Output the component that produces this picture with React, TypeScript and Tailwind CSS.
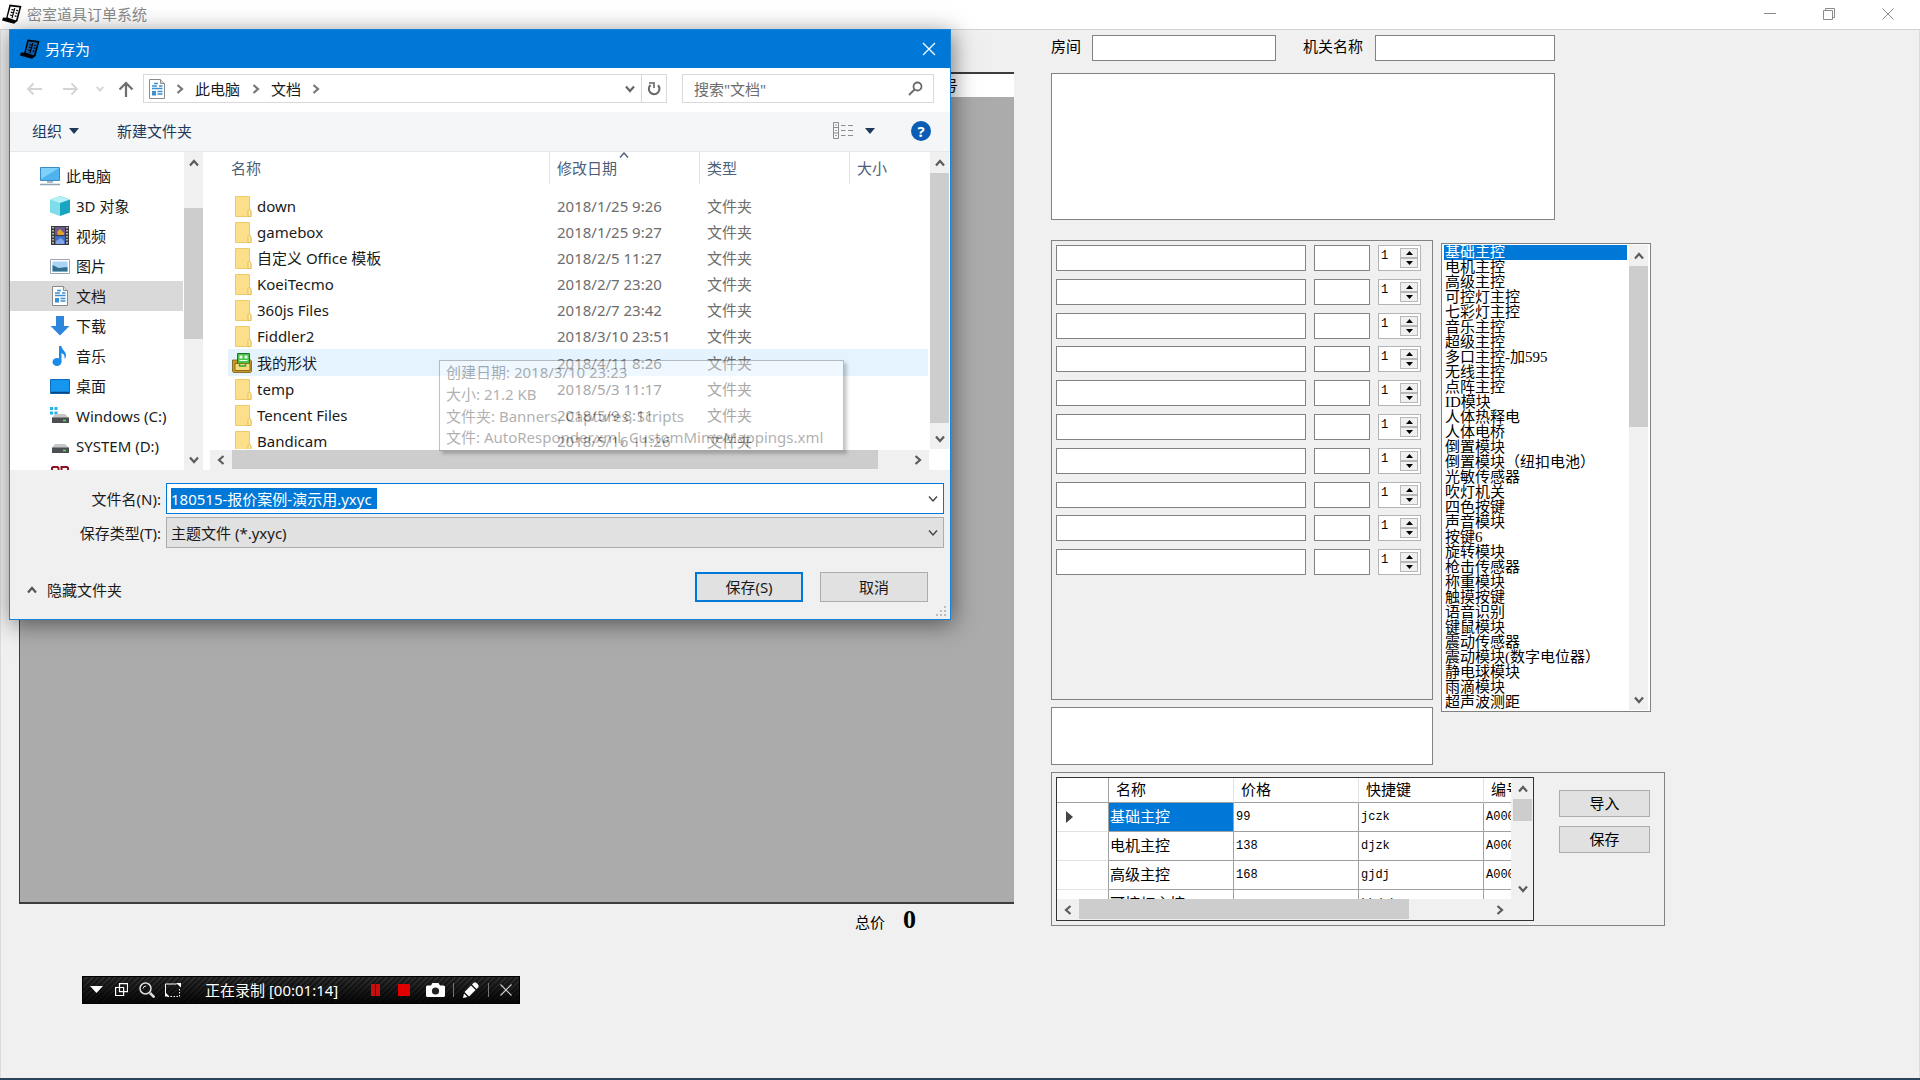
import type { ReactNode } from "react";

const ui = "font-['Noto_Sans','Noto_Sans_CJK_SC',sans-serif] text-[15px] leading-5";
const song = "font-['Liberation_Serif','Noto_Sans_CJK_SC',serif] text-[15px] leading-5";
const mono = "font-['Liberation_Mono',monospace] text-xs";

type Dir = "up" | "down" | "left" | "right";

const chevrons: Record<Dir, string> = {
  up: "M2 8.5 6 4l4 4.5",
  down: "M2 3.5 6 8l4-4.5",
  left: "M8.5 2 4 6l4.5 4",
  right: "M3.5 2 8 6l-4.5 4",
};

function Chevron({ dir, thin, className = "" }: { dir: Dir; thin?: boolean; className?: string }) {
  return (
    <svg viewBox="0 0 12 12" className={`h-3 w-3 shrink-0 ${className}`} fill="none" stroke="currentColor" strokeWidth={thin ? 1.4 : 2.2}>
      <path d={chevrons[dir]} />
    </svg>
  );
}

function VScroll({ className, thumb }: { className: string; thumb: string }) {
  return (
    <div className={`flex w-[19px] shrink-0 flex-col items-center bg-[#f0f0f0] text-[#5c5c5c] ${className}`}>
      <button aria-label="向上滚动" className="flex h-[21px] w-full shrink-0 items-center justify-center">
        <Chevron dir="up" />
      </button>
      <div className="w-full flex-1 overflow-hidden">
        <div className={`w-full bg-[#cdcdcd] ${thumb}`} />
      </div>
      <button aria-label="向下滚动" className="flex h-[21px] w-full shrink-0 items-center justify-center">
        <Chevron dir="down" />
      </button>
    </div>
  );
}

function HScroll({ className, thumb }: { className: string; thumb: string }) {
  return (
    <div className={`flex items-stretch bg-[#f0f0f0] text-[#5c5c5c] ${className}`}>
      <button aria-label="向左滚动" className="flex w-[22px] shrink-0 items-center justify-center">
        <Chevron dir="left" />
      </button>
      <div className="flex-1">
        <div className={`h-full bg-[#cdcdcd] ${thumb}`} />
      </div>
      <button aria-label="向右滚动" className="flex w-[22px] shrink-0 items-center justify-center">
        <Chevron dir="right" />
      </button>
    </div>
  );
}

function AppIcon({ paper }: { paper: string }) {
  return (
    <svg viewBox="0 0 20 20" className="h-5 w-5 shrink-0">
      <path d="M7.500.5 19.500 2 15.500 17 12 19.800 0 16.500l1-3 3.200.3z" fill="#000" />
      <path d="M8.600 2.500 17.500 3.600 14 16.200 11.800 15.800 5.600 13.400z" fill={paper} />
      <path d="M9.500 5.500l2 .4M8.800 8.200l2 .5M8 11l2 .5M12.800 4.200l-2.800 10M14.200 6.300l1.800.3M13.500 9l1.900.4M12.700 11.800l1.800.5" stroke="#000" strokeWidth="1.200" fill="none" />
    </svg>
  );
}

function DocIcon() {
  return (
    <svg viewBox="0 0 16 20" className="h-5 w-4">
      <path d="M.5.5h11l4 4v15H.5z" fill="#fff" stroke="#8a8a8a" />
      <path d="M11.500.5v4h4" fill="#ddd" stroke="#8a8a8a" />
      <path d="M5 4.500h4M3 7h5M10 7h3.500M3 9.500h10.500M8.500 12.500h5M8.500 15h5" stroke="#3b8ed0" strokeWidth="1.400" />
      <path d="M3 12h4v4.500H3z" fill="#3b8ed0" />
    </svg>
  );
}

function FolderIcon() {
  return (
    <svg viewBox="0 0 17 21" className="h-[21px] w-[17px] shrink-0">
      <path d="M.5.5h14v14l1.500 1v5H.5z" fill="#fbdf8a" stroke="#ecc969" />
      <path d="M13 20.500v-6l1.500-1.500 1.500 2v5.500z" fill="#ffe9a6" stroke="#e3bd58" />
    </svg>
  );
}

function ShapesIcon() {
  return (
    <svg viewBox="0 0 20 20" className="h-5 w-5 shrink-0">
      <path d="M.5 7h5v-1h12l2 2v10.500l-1 1h-17l-1-1z" fill="#c89a2c" stroke="#7a5a10" strokeWidth=".8" />
      <path d="M5.500.5h12v11h-12z" fill="#4cc44c" stroke="#167a1c" />
      <path d="M7.500 2.500h3v3h-3zM12.500 2.500h3v3h-3z" fill="#e9ffe6" />
      <path d="M7.500 7.500h8" stroke="#e9ffe6" />
      <path d="M3 10.500h15v7H3z" fill="#f4dc7c" stroke="#8c6a18" />
      <path d="M7.500 10v3h6v-3" fill="none" stroke="#35a335" strokeWidth="1.500" />
    </svg>
  );
}

const places: { name: string; icon: ReactNode; root?: boolean }[] = [
  {
    name: "此电脑",
    root: true,
    icon: (
      <>
        <path d="M.5 1.500h19v13H.5z" fill="#4fb3ee" stroke="#3b8cc4" />
        <path d="M1 2h18L1 13z" fill="#7fd0fa" />
        <path d="M7 16h6M0 18.500h20" stroke="#8fa3b3" strokeWidth="1.500" />
      </>
    ),
  },
  {
    name: "3D 对象",
    icon: (
      <>
        <path d="M10 0 0 3.500v13L10 20z" fill="#7fdcea" />
        <path d="M10 0l10 3.500v13L10 20z" fill="#18a5bf" />
        <path d="M10 0 0 3.500 10 7l10-3.500z" fill="#b5f0f5" />
      </>
    ),
  },
  {
    name: "视频",
    icon: (
      <>
        <path d="M1 0h18v19H1z" fill="#3a3a3a" />
        <path d="M5 1h10v8H5z" fill="#6a5a8c" />
        <path d="M5 10h10v8H5z" fill="#3a6cc8" />
        <path d="M7 6l3-3 4 4v2H8z" fill="#e0a030" />
        <path d="M6 15l5-3 3 3v3H6z" fill="#7fa5e8" />
        <path d="M3 1v18M17 1v18" stroke="#ddd" strokeWidth="1.500" strokeDasharray="1.500 1.500" />
      </>
    ),
  },
  {
    name: "图片",
    icon: (
      <>
        <path d="M.5 3.500h19v14H.5z" fill="#fff" stroke="#9aa5b0" />
        <path d="M2.500 5.500h15v10h-15z" fill="#a9d3f2" />
        <path d="M2.500 9l6 3 9-1v4.500h-15z" fill="#2f6e8c" />
      </>
    ),
  },
  { name: "文档", icon: null },
  { name: "下载", icon: <path d="M6 0h8v10h5.500L10 19.500.5 10H6z" fill="#2e86dc" /> },
  {
    name: "音乐",
    icon: (
      <>
        <ellipse cx="7" cy="16" rx="4.500" ry="4" fill="#1a8be8" />
        <path d="M9 0h2.500c0 4 5 5 4.500 10-.5 2-1 2.500-1.500 3 .5-4-1-5-3-6v9H9z" fill="#1a8be8" />
      </>
    ),
  },
  {
    name: "桌面",
    icon: (
      <>
        <path d="M.5 3.500h19v14H.5z" fill="#1796f0" stroke="#0c6cc0" />
        <path d="M1 16.500h18" stroke="#08457c" strokeWidth="1.500" />
      </>
    ),
  },
  {
    name: "Windows (C:)",
    icon: (
      <>
        <path d="M0 1h3v3H0zM4.500 1h3v3h-3zM0 5.500h3v3H0zM4.500 5.500h3v3h-3z" fill="#22b1e8" />
        <path d="M5 8h10l4 4H2z" fill="#c3c7ca" />
        <path d="M2 11.500h17v5.500H2z" fill="#4c4f52" />
        <path d="M13 14.500h3" stroke="#5fe06a" strokeWidth="1.500" />
      </>
    ),
  },
  {
    name: "SYSTEM (D:)",
    icon: (
      <>
        <path d="M5 8h10l4 4H2z" fill="#c3c7ca" />
        <path d="M2 11.500h17v5.500H2z" fill="#4c4f52" />
        <path d="M13 14.500h3" stroke="#5fe06a" strokeWidth="1.500" />
      </>
    ),
  },
];

const files = [
  ["down", "2018/1/25 9:26"],
  ["gamebox", "2018/1/25 9:27"],
  ["自定义 Office 模板", "2018/2/5 11:27"],
  ["KoeiTecmo", "2018/2/7 23:20"],
  ["360js Files", "2018/2/7 23:42"],
  ["Fiddler2", "2018/3/10 23:51"],
  ["我的形状", "2018/4/11 8:26"],
  ["temp", "2018/5/3 11:17"],
  ["Tencent Files", "2018/5/9 8:11"],
  ["Bandicam", "2018/5/16 11:26"],
];

const modules = [
  "基础主控", "电机主控", "高级主控", "可控灯主控", "七彩灯主控", "音乐主控", "超级主控",
  "多口主控-加595", "无线主控", "点阵主控", "ID模块", "人体热释电", "人体电桥", "倒置模块",
  "倒置模块（纽扣电池）", "光敏传感器", "吹灯机关", "四色按键", "声音模块", "按键6", "旋转模块",
  "枪击传感器", "称重模块", "触摸按键", "语音识别", "键鼠模块", "震动传感器",
  "震动模块(数字电位器）", "静电球模块", "雨滴模块", "超声波测距",
];

const prices = [
  ["基础主控", "99", "jczk", "A0001"],
  ["电机主控", "138", "djzk", "A0002"],
  ["高级主控", "168", "gjdj", "A0003"],
  ["可控灯主控", "", "kkdzk", ""],
];

function SaveDialog() {
  return (
    <section
      role="dialog"
      aria-label="另存为"
      className={`absolute top-[29px] left-[9px] flex w-[942px] flex-col border border-[#1883d7] bg-[#f0f0f0] text-[#1a1a1a] shadow-[2px_4px_22px_rgba(0,0,0,0.5)] ${ui}`}
    >
      <header className="flex h-[38px] items-center bg-[#0078d7] pr-[13px] pl-[10px] text-white">
        <AppIcon paper="#0a5fae" />
        <h2 className="ml-[5px] flex-1 pb-px">另存为</h2>
        <button aria-label="关闭" className="p-px">
          <svg viewBox="0 0 14 14" className="h-[14px] w-[14px]" stroke="currentColor" strokeWidth="1.300">
            <path d="M1 1l12 12M13 1 1 13" />
          </svg>
        </button>
      </header>

      <div className="flex h-11 items-center bg-white px-4 pb-[3px]">
        <button aria-label="后退" className="text-[#d4d4d4]">
          <svg viewBox="0 0 16 16" className="h-4 w-4" fill="none" stroke="currentColor" strokeWidth="1.800">
            <path d="M16 8H2M7.500 2.500 2 8l5.500 5.500" />
          </svg>
        </button>
        <button aria-label="前进" className="ml-[21px] text-[#d4d4d4]">
          <svg viewBox="0 0 16 16" className="h-4 w-4" fill="none" stroke="currentColor" strokeWidth="1.800">
            <path d="M0 8h14M8.500 2.500 14 8l-5.500 5.500" />
          </svg>
        </button>
        <button aria-label="最近位置" className="ml-4 text-[#d4d4d4]">
          <Chevron dir="down" className="h-[10px] w-[10px]" />
        </button>
        <button aria-label="上移" className="ml-[13px] text-[#6e6e6e]">
          <svg viewBox="0 0 16 16" className="h-4 w-4" fill="none" stroke="currentColor" strokeWidth="2.200">
            <path d="M8 16V2M1.500 8.500 8 2l6.500 6.500" />
          </svg>
        </button>
        <nav className="ml-[9px] flex h-[29px] flex-1 items-center border border-[#d9d9d9] pl-[5px]">
          <DocIcon />
          <Chevron dir="right" className="ml-[9px] text-[#777]" />
          <a href="#pc" className="ml-[9px]">此电脑</a>
          <Chevron dir="right" className="ml-[10px] text-[#777]" />
          <a href="#docs" className="ml-[9px]">文档</a>
          <Chevron dir="right" className="ml-[9px] text-[#777]" />
          <span className="flex-1" />
          <button aria-label="历史位置" className="px-[5px] text-[#666]">
            <Chevron dir="down" />
          </button>
          <button aria-label="刷新" className="flex h-full w-[25px] items-center justify-center border-l border-[#d9d9d9] text-[#666]">
            <svg viewBox="0 0 14 14" className="h-[14px] w-[14px]" fill="none" stroke="currentColor" strokeWidth="2">
              <path d="M3.500 3a5.300 5.300 0 1 0 7.500.2" />
              <path d="M2 1h5v5" strokeWidth="1.600" />
            </svg>
          </button>
        </nav>
        <div className="ml-[15px] flex h-[29px] w-[252px] items-center border border-[#d9d9d9] pr-[10px] pl-[11px]">
          <input aria-label="搜索文档" placeholder={'搜索"文档"'} className="min-w-0 flex-1 outline-none placeholder:text-[#6d6d6d]" />
          <svg viewBox="0 0 15 15" className="h-[15px] w-[15px] text-[#6a6a6a]" fill="none" stroke="currentColor" strokeWidth="1.800">
            <circle cx="9.500" cy="5.500" r="4" />
            <path d="M6.500 8.500 1 14" />
          </svg>
        </div>
      </div>

      <div className="flex h-10 items-center border-b border-[#e8e8e8] bg-[#f5f6f7] pr-[19px] pb-[2px] pl-[22px] text-[#1e395b]">
        <button className="flex items-center gap-[7px]">
          组织
          <svg viewBox="0 0 10 6" className="h-[6px] w-[10px]" fill="currentColor"><path d="M0 0h10L5 6z" /></svg>
        </button>
        <button className="ml-[38px]">新建文件夹</button>
        <span className="flex-1" />
        <button aria-label="更改视图" className="flex items-center gap-[12px]">
          <svg viewBox="0 0 20 17" className="h-[17px] w-5" fill="none" stroke="#8c8c8c">
            <path d="M.5.5h5v16h-5zM.5 5.500h5M.5 11h5M8 3.500h4.500M15 3.500h5M8 8.500h4.500M15 8.500h5M8 13.500h4.500M15 13.500h5" />
            <path d="M2.500 3h1M2.500 8.500h1M2.500 13.500h1" stroke="#555" />
          </svg>
          <svg viewBox="0 0 10 6" className="h-[6px] w-[10px]" fill="currentColor"><path d="M0 0h10L5 6z" /></svg>
        </button>
        <button aria-label="帮助" className="ml-9 flex h-5 w-5 items-center justify-center rounded-full bg-[#0b5cb5] font-bold text-white">
          ?
        </button>
      </div>

      <div className="flex h-[318px] bg-white">
        <ul className="h-full w-[174px] overflow-hidden pt-[9px] pr-px">
          {places.map((p) => (
            <li
              key={p.name}
              className={`flex h-[30px] items-center gap-[6px] ${p.root ? "pl-[30px]" : "pl-10"} ${p.name === "文档" ? "bg-[#d9d9d9]" : ""}`}
            >
              {p.icon ? (
                <svg viewBox="0 0 20 20" className="h-5 w-5 shrink-0">{p.icon}</svg>
              ) : (
                <span className="flex w-5 shrink-0 justify-center"><DocIcon /></span>
              )}
              <a href="#place" className="whitespace-nowrap">{p.name}</a>
            </li>
          ))}
          <li className="flex h-[30px] items-start pt-[5px] pl-[41px]">
            <svg viewBox="0 0 18 14" className="h-[14px] w-[18px]" fill="none" stroke="#8c1020" strokeWidth="2">
              <path d="M7.500 4.500V2L6.500 1H2L1 2v9h6.500M10.500 12V1H16l1 1v5h-6" />
            </svg>
          </li>
        </ul>
        <VScroll className="mr-[7px]" thumb="mt-[35px] h-[131px]" />

        <div className="flex min-w-0 flex-1 flex-col">
          <div className="flex h-[297px]">
            <div className="h-full min-w-0 flex-1 overflow-hidden pl-[18px]">
              <table className="w-full table-fixed border-collapse text-left">
                <thead>
                  <tr className="h-[41px] align-top text-[#4c607a]">
                    <th className="w-[322px] p-0 font-normal">
                      <div className="flex h-8 items-center border-r border-[#e2e2e2] pl-[3px]">名称</div>
                    </th>
                    <th className="w-[150px] p-0 font-normal">
                      <div className="relative flex h-8 items-center border-r border-[#e2e2e2] pl-[7px]">
                        修改日期
                        <Chevron dir="up" thin className="absolute -top-[3px] left-[68px]" />
                      </div>
                    </th>
                    <th className="w-[150px] p-0 font-normal">
                      <div className="flex h-8 items-center border-r border-[#e2e2e2] pl-[7px]">类型</div>
                    </th>
                    <th className="p-0 font-normal">
                      <div className="flex h-8 items-center pl-[7px]">大小</div>
                    </th>
                  </tr>
                </thead>
                <tbody>
                  {files.map(([name, date]) => (
                    <tr key={name} className={name === "我的形状" ? "h-[27px] bg-[#e5f3ff]" : "h-[26px]"}>
                      <td className="p-0">
                        <div className={`flex items-center ${name === "我的形状" ? "gap-[5px] pl-1" : "gap-[5px] pl-[7px]"}`}>
                          {name === "我的形状" ? <ShapesIcon /> : <FolderIcon />}
                          {name}
                        </div>
                      </td>
                      <td className="p-0 pl-[7px] whitespace-nowrap text-[#6d6d6d]">{date}</td>
                      <td className="p-0 pl-[7px] text-[#6d6d6d]">文件夹</td>
                      <td className="p-0" />
                    </tr>
                  ))}
                </tbody>
              </table>
            </div>
            <VScroll className="mr-px ml-[2px]" thumb="h-[250px]" />
          </div>
          <HScroll className="mt-px mr-[21px] h-5" thumb="w-[646px] border-b border-[#f0f0f0]" />
        </div>
      </div>

      <div
        role="tooltip"
        className="absolute top-[330px] left-[429px] grid h-[91px] w-[405px] auto-rows-fr border border-[#666] bg-white px-[6px] py-px whitespace-nowrap text-[#3c3c3c] opacity-40 shadow-[3px_3px_3px_rgba(0,0,0,0.5)]"
      >
        <span>创建日期: 2018/3/10 23:23</span>
        <span>大小: 21.2 KB</span>
        <span>文件夹: Banners, Captures, Scripts</span>
        <span>文件: AutoResponder.xml, CustomMimeMappings.xml</span>
      </div>

      <div className="mt-[13px] flex h-[31px] items-center pr-[6px]">
        <label htmlFor="filename" className="w-[151px] shrink-0 text-right">文件名(N):</label>
        <div className="ml-[5px] flex h-full flex-1 items-center border border-[#0078d7] bg-white pr-1 pl-1">
          <input
            id="filename"
            defaultValue="180515-报价案例-演示用.yxyc"
            className="h-[21px] w-[206px] bg-[#0078d7] text-white outline-none"
          />
          <span className="flex-1" />
          <Chevron dir="down" thin className="text-[#444]" />
        </div>
      </div>
      <div className="mt-[3px] flex h-[31px] items-center pr-[6px]">
        <label htmlFor="filetype" className="w-[151px] shrink-0 text-right">保存类型(T):</label>
        <div className="ml-[5px] flex h-full flex-1 items-center border border-[#adadad] bg-[#e1e1e1] pr-1 pl-1">
          <select id="filetype" className="flex-1 appearance-none outline-none">
            <option>主题文件 (*.yxyc)</option>
          </select>
          <Chevron dir="down" thin className="text-[#444]" />
        </div>
      </div>
      <div className="mt-6 flex items-start pr-[22px] pl-4">
        <button className="mt-[8px] flex flex-1 items-center gap-[9px]">
          <Chevron dir="up" className="text-[#555]" />
          隐藏文件夹
        </button>
        <button className="h-[30px] w-[108px] border-2 border-[#0078d7] bg-[#e1e1e1]">保存(S)</button>
        <button className="ml-[17px] h-[30px] w-[108px] border border-[#adadad] bg-[#e1e1e1]">取消</button>
      </div>
      <svg viewBox="0 0 11 11" className="mt-1 mr-[3px] mb-[2px] h-[11px] w-[11px] self-end" fill="#bdbdbd">
        <path d="M8 0h2v2H8zM4 4h2v2H4zM8 4h2v2H8zM0 8h2v2H0zM4 8h2v2H4zM8 8h2v2H8z" />
      </svg>
    </section>
  );
}

function QuantityRow({ index }: { index: number }) {
  return (
    <div className="flex items-start">
      <input aria-label={`名称 ${index}`} className="h-[26px] min-w-0 flex-1 border border-[#828282] bg-white" />
      <input aria-label={`价格 ${index}`} className="ml-2 h-[26px] w-[56px] border border-[#828282] bg-white" />
      <div className="ml-2 flex h-[26px] w-[43px] border border-[#b4b4b4] bg-white p-[2px]">
        <input aria-label={`数量 ${index}`} defaultValue="1" className={`h-4 w-5 min-w-0 flex-1 outline-none ${mono}`} />
        <div className="flex w-[18px] flex-col">
          <button aria-label="增加" className="flex flex-1 items-center justify-center border border-[#b8b8b8] bg-[#f0f0f0]">
            <svg viewBox="0 0 7 4" className="h-1 w-[7px]"><path d="M0 4h7L3.500 0z" /></svg>
          </button>
          <button aria-label="减少" className="flex flex-1 items-center justify-center border border-[#b8b8b8] bg-[#f0f0f0]">
            <svg viewBox="0 0 7 4" className="h-1 w-[7px]"><path d="M0 0h7L3.500 4z" /></svg>
          </button>
        </div>
      </div>
    </div>
  );
}

function PriceTable() {
  const line = "border-r border-b border-[#a0a0a0]";
  return (
    <div className="flex h-[144px] w-[478px] flex-col border border-[#333] bg-[#f0f0f0]">
      <div className="flex h-[121px]">
        <div className="min-w-0 flex-1 overflow-hidden bg-white">
          <table className="w-[552px] table-fixed border-separate border-spacing-0 text-left">
            <thead>
              <tr className="h-[25px]">
                <th className={`w-[52px] p-0 ${line}`} />
                {["名称", "价格", "快捷键", "编号"].map((h) => (
                  <th key={h} className="border-r border-b border-r-[#e2e2e2] border-b-[#a0a0a0] p-0 pl-[7px] font-normal">{h}</th>
                ))}
              </tr>
            </thead>
            <tbody>
              {prices.map(([name, price, key, code], i) => (
                <tr key={name} className="h-[29px]">
                  <td className="border-r border-b border-r-[#a0a0a0] border-b-[#e2e2e2] p-0 pl-[9px]">
                    {i === 0 ? (
                      <svg viewBox="0 0 7 12" className="h-3 w-[7px]" fill="#444"><path d="M0 0v12l7-6z" /></svg>
                    ) : null}
                  </td>
                  <td className={`p-0 pl-px ${line} ${i === 0 ? "bg-[#0078d7] text-white" : ""}`}>{name}</td>
                  <td className={`p-0 pl-[2px] ${line} ${mono}`}>{price}</td>
                  <td className={`p-0 pl-[2px] ${line} ${mono}`}>{key}</td>
                  <td className={`p-0 pl-[2px] ${line} ${mono}`}>{code}</td>
                </tr>
              ))}
            </tbody>
          </table>
        </div>
        <VScroll className="mr-px ml-[2px]" thumb="h-[22px]" />
      </div>
      <HScroll className="mr-[22px] h-[21px]" thumb="w-[330px] border-b border-[#f0f0f0]" />
    </div>
  );
}

function RecorderBar() {
  return (
    <div
      role="toolbar"
      aria-label="录制"
      className="absolute top-[976px] left-[82px] w-[438px] border border-black bg-linear-to-b from-[#333] to-[#080808]"
    >
      <div className={`flex h-[26px] items-center bg-[repeating-linear-gradient(135deg,rgba(0,0,0,0.45)_0px,rgba(0,0,0,0.45)_2px,transparent_3px,transparent_4px)] pb-px text-white ${ui}`}>
        <button aria-label="菜单" className="ml-[7px]">
          <svg viewBox="0 0 13 7" className="h-[7px] w-[13px]" fill="currentColor"><path d="M0 0h13L6.500 7z" /></svg>
        </button>
        <button aria-label="窗口" className="ml-3">
          <svg viewBox="0 0 13 13" className="h-[13px] w-[13px]" fill="none" stroke="currentColor" strokeWidth="1.200">
            <path d="M4.500.6h8v8h-8zM.6 4.500h8v8h-8z" />
          </svg>
        </button>
        <button aria-label="缩放" className="ml-[11px]">
          <svg viewBox="0 0 16 16" className="h-4 w-4" fill="none" stroke="#ddd" strokeWidth="1.500">
            <circle cx="6.500" cy="6.500" r="5.500" />
            <path d="M4 6.500A3 3 0 0 1 7 4" strokeWidth="1" />
            <path d="M11 11l4.500 4.500" strokeWidth="2.500" />
          </svg>
        </button>
        <button aria-label="区域" className="ml-[10px]">
          <svg viewBox="0 0 16 14" className="h-[14px] w-4" fill="none" stroke="currentColor">
            <path d="M.5 12V1h11" />
            <path d="M14.500 6v7.500H1" strokeDasharray="1.500 1.500" />
            <path d="M11 0h5v4.500zM0 9l4.500 4.500H0z" fill="currentColor" stroke="none" />
          </svg>
        </button>
        <span className="ml-6 flex-1 whitespace-nowrap">正在录制 [00:01:14]</span>
        <button aria-label="暂停" className="mr-[18px]">
          <svg viewBox="0 0 9 12" className="h-3 w-[9px]" fill="#c80f0f"><path d="M0 0h4v12H0zM5 0h4v12H5z" /></svg>
        </button>
        <button aria-label="停止" className="mr-4 h-3 w-3 bg-[#e00000]" />
        <button aria-label="截图" className="mr-2">
          <svg viewBox="0 0 19 14" className="h-[14px] w-[19px]">
            <path d="M1 2.500h4L6.500 0h6L14 2.500h4l1 1V13l-1 1H1l-1-1V3.500z" fill="#fff" />
            <circle cx="9.500" cy="8" r="3.600" fill="#222" />
          </svg>
        </button>
        <span className="h-[14px] w-px bg-[#777]" />
        <button aria-label="画笔" className="mx-[9px]">
          <svg viewBox="0 0 16 16" className="h-4 w-4" fill="#fff">
            <path d="M11 .5h2L15.500 3v2l-2 2L9 2.500zM8 3.500 12.500 8 6 14.500 1.500 10zM1 11.500 4.500 15 0 16z" />
          </svg>
        </button>
        <span className="h-[14px] w-px bg-[#777]" />
        <button aria-label="关闭录制" className="mr-[7px] ml-[11px]">
          <svg viewBox="0 0 12 12" className="h-3 w-3" stroke="#ccc" strokeWidth="1.200"><path d="M.5.5l11 11M11.500.5l-11 11" /></svg>
        </button>
      </div>
    </div>
  );
}

export default function App() {
  return (
    <div className={`relative flex min-h-screen flex-col border-b-2 border-[#29445c] bg-[#f0f0f0] text-black ${song}`}>
      <header className={`flex h-[30px] items-center border-b border-[#d2d2d2] bg-white pr-[26px] pb-[2px] pl-[2px] text-[#8a8a8a] ${ui}`}>
        <AppIcon paper="#fff" />
        <h1 className="ml-[5px] flex-1">密室道具订单系统</h1>
        <div className="flex items-center gap-[47px]">
          <button aria-label="最小化">
            <svg viewBox="0 0 12 12" className="h-3 w-3" stroke="currentColor"><path d="M0 5.500h12" /></svg>
          </button>
          <button aria-label="还原">
            <svg viewBox="0 0 12 12" className="h-3 w-3" fill="none" stroke="currentColor"><path d="M.5 2.500h9v9h-9zM2.500 2.500v-2h9v9h-2" /></svg>
          </button>
          <button aria-label="关闭">
            <svg viewBox="0 0 12 12" className="h-3 w-3" stroke="currentColor"><path d="M.5.5l11 11M11.500.5l-11 11" /></svg>
          </button>
        </div>
      </header>

      <main className="flex flex-1 items-stretch gap-[37px] border-x border-[#dcdcdc] pr-[254px] pl-[18px]">
        <div className="flex min-w-0 flex-1 flex-col pt-[42px] pb-[142px]">
          <div className="flex flex-1 flex-col border-t-2 border-b-2 border-l border-[#3c3c3c] bg-[#ababab]">
            <div className="flex h-[23px] items-center justify-end bg-white pr-[56px]">编号</div>
          </div>
          <div className="flex h-8 items-center justify-end gap-[18px] pr-[98px]">
            <span className="mt-[6px]">总价</span>
            <output className="text-[26px] font-bold">0</output>
          </div>
        </div>

        <div className="w-[614px] shrink-0 pt-[5px]">
          <div className="flex h-[26px] items-center">
            <label htmlFor="room" className="w-[41px] pb-[2px]">房间</label>
            <input id="room" className="h-full w-[184px] border border-[#828282] bg-white" />
            <label htmlFor="gear" className="ml-[27px] w-[72px] pb-[2px] whitespace-nowrap">机关名称</label>
            <input id="gear" className="h-full w-[180px] border border-[#828282] bg-white" />
          </div>
          <textarea aria-label="备注" className="mt-3 block h-[147px] w-[504px] resize-none border border-[#828282] bg-white" />

          <div className="mt-5 flex items-start gap-2">
            <div className="w-[382px]">
              <div className="h-[460px] border border-[#828282] pt-1 pr-[11px] pl-1">
                <div className="grid h-[338px] auto-rows-fr">
                  {Array.from({ length: 10 }, (_, i) => (
                    <QuantityRow key={i} index={i + 1} />
                  ))}
                </div>
              </div>
              <textarea aria-label="说明" className="mt-[7px] block h-[58px] w-full resize-none border border-[#828282] bg-white" />
            </div>
            <div className="mt-[3px] flex h-[469px] w-[210px] border border-[#828282] bg-white py-px pr-[2px] pl-[2px]">
              <ul role="listbox" aria-label="模块" className="h-full min-w-0 flex-1 leading-[15px]">
                {modules.map((m, i) => (
                  <li
                    key={m}
                    role="option"
                    aria-selected={i === 0}
                    className={`h-[15px] pl-px whitespace-nowrap ${i === 0 ? "bg-[#0078d7] text-white" : ""}`}
                  >
                    {m}
                  </li>
                ))}
              </ul>
              <VScroll className="ml-[2px]" thumb="h-[161px]" />
            </div>
          </div>

          <div className="mt-[7px] flex items-start border border-[#828282] p-1">
            <PriceTable />
            <div className="mt-[13px] ml-[25px] flex flex-col gap-[9px]">
              <button className="h-[27px] w-[91px] border border-[#adadad] bg-[#e1e1e1]">导入</button>
              <button className="h-[27px] w-[91px] border border-[#adadad] bg-[#e1e1e1]">保存</button>
            </div>
          </div>
        </div>
      </main>

      <SaveDialog />
      <RecorderBar />
    </div>
  );
}
